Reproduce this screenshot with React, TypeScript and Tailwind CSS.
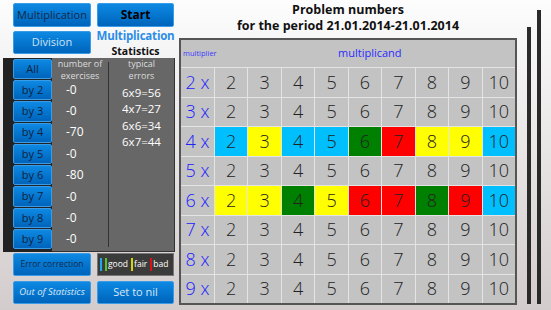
import React from "react";

const cellColor: Record<string, string> = {
  c: "bg-[#00bfff]",
  y: "bg-[#ffff00]",
  g: "bg-[#008000]",
  r: "bg-[#ff0000]",
  n: "bg-[#c3c3c3]",
};

const special: Record<number, string[]> = {
  4: ["c", "y", "c", "c", "g", "r", "y", "y", "c"],
  6: ["y", "y", "g", "y", "r", "r", "g", "r", "c"],
};

const btn =
  "flex items-center justify-center rounded-[2px] border border-[#3a9be6] bg-gradient-to-b from-[#0e89e3] to-[#0064bb]";

const byRows = ["by 2", "by 3", "by 4", "by 5", "by 6", "by 7", "by 8", "by 9"];
const values = ["-0", "-0", "-70", "-0", "-80", "-0", "-0", "-0"];
const errs = ["6x9=56", "4x7=27", "6x6=34", "6x7=44"];

export default function App() {
  const mults = [2, 3, 4, 5, 6, 7, 8, 9];
  const nums = [2, 3, 4, 5, 6, 7, 8, 9, 10];
  return (
    <div className="w-[551px] h-[310px] overflow-hidden bg-gradient-to-b from-[#fdfdfd] to-[#d3cccc] flex font-['Open_Sans',sans-serif]">
      {/* Left column */}
      <div className="w-[179px] flex flex-col pt-[3px]">
        <div className="flex ml-[13px] gap-[6px]">
          <div className={`${btn} w-[78px] h-[24px] text-[11px] text-[#13294a]`}>Multiplication</div>
          <div className={`${btn} w-[77px] h-[24px] text-[12px] font-bold text-black`}>Start</div>
        </div>
        <div className="flex items-start ml-[13px] gap-[6px] mt-[4px] h-[27px]">
          <div className={`${btn} w-[78px] h-[23px] text-[11px] text-[#cfe2f5]`}>Division</div>
          <div className="w-[77px] flex flex-col items-center -mt-[3px]">
            <div className="text-[11.5px] leading-[16px] font-bold text-[#2b8de6] tracking-[-0.2px]">Multiplication</div>
            <div className="text-[10.5px] leading-[14px] font-bold text-[#111]">Statistics</div>
          </div>
        </div>
        {/* Panel */}
        <div className="ml-[3px] w-[172px] h-[194px] flex border-r border-[#333] bg-[#222]">
          <div className="w-[10px]" />
          <div className="w-[39px] flex flex-col pt-[1px]">
            <div className={`${btn} h-[20px] mb-[1px] text-[11px] text-[#0f2340]`}>All</div>
            {byRows.map((b) => (
              <div key={b} className={`${btn} h-[20.3px] mb-[1px] text-[11px] text-[#0f2340]`}>
                {b}
              </div>
            ))}
          </div>
          <div className="flex-1 bg-[#676767] flex relative border-b border-[#333]">
            <div className="w-[56px] flex flex-col">
              <div className="h-[21px] text-[9px] leading-[12px] text-[#dcdcdc] text-center">
                number of
                <br />
                exercises
              </div>
              {values.map((v, i) => (
                <div key={i} className="h-[21.4px] flex items-center pl-[14px] text-[12px] text-white">
                  {v}
                </div>
              ))}
            </div>
            <div className="w-px bg-[#333] my-[4px]" />
            <div className="flex-1 flex flex-col items-center">
              <div className="h-[21px] text-[9px] leading-[12px] text-[#dcdcdc] text-center">
                typical
                <br />
                errors
              </div>
              <div className="mt-[5px] flex flex-col items-center">
                {errs.map((e) => (
                  <div key={e} className="h-[16.5px] flex items-center text-[11.5px] text-white">
                    {e}
                  </div>
                ))}
              </div>
            </div>
          </div>
        </div>
        <div className="flex ml-[13px] gap-[6px] mt-[1px]">
          <div className={`${btn} w-[78px] h-[23px] text-[8.5px] text-[#13294a]`}>Error correction</div>
          <div className="w-[77px] h-[23px] bg-[#3b3b3b] border border-[#777] flex items-center px-[2px] gap-[1px] text-[8.5px] text-white">
            <span className="w-[2px] h-[13px] bg-[#22a7e8]" />
            <span className="w-[2px] h-[13px] bg-[#55c32a] ml-[2px]" />
            <span>good</span>
            <span className="w-[2px] h-[13px] bg-[#d4d40a] ml-[2px]" />
            <span>fair</span>
            <span className="w-[2px] h-[13px] bg-[#e01010] ml-[2px]" />
            <span>bad</span>
          </div>
        </div>
        <div className="flex ml-[13px] gap-[6px] mt-[5px]">
          <div className={`${btn} w-[78px] h-[23px] text-[9.5px] italic text-[#dbe7f4]`}>Out of Statistics</div>
          <div className={`${btn} w-[77px] h-[23px] text-[11px] text-[#dbe7f4]`}>Set to nil</div>
        </div>
      </div>

      {/* Right section */}
      <div className="w-[338px] flex flex-col">
        <div className="h-[38px] flex flex-col items-center pt-[2px] text-[12.5px] leading-[16px] font-bold text-[#111]">
          <div>Problem numbers</div>
          <div>for the period 21.01.2014-21.01.2014</div>
        </div>
        <div className="h-[267px] border-2 border-[#555] bg-[#e4e4e4] grid grid-cols-[33px_repeat(9,1fr)] grid-rows-[27px_repeat(8,1fr)] gap-px">
          <div className="col-span-10 bg-[#c3c3c3] flex items-center relative">
            <span className="ml-[2px] text-[7.5px] text-[#3a3aff]">multiplier</span>
            <span className="absolute left-[157px] text-[11px] text-[#2a2aff]">multiplicand</span>
          </div>
          {mults.map((m) => (
            <React.Fragment key={m}>
              <div className="bg-[#c3c3c3] flex items-center justify-center text-[18px] font-light text-[#2020ff]">
                {m} x
              </div>
              {nums.map((n, i) => {
                const c = special[m] ? special[m][i] : "n";
                return (
                  <div
                    key={n}
                    className={`${cellColor[c]} flex items-center justify-center text-[18px] font-light text-[#222]`}
                  >
                    {n}
                  </div>
                );
              })}
            </React.Fragment>
          ))}
        </div>
      </div>

      <div className="w-[10px]" />
      <div className="w-[4px] h-[277px] mt-[27px] bg-[#2a2a2a]" />
      <div className="w-[6px]" />
      <div className="w-[4px] h-[294px] mt-[10px] bg-[#2a2a2a]" />
    </div>
  );
}
